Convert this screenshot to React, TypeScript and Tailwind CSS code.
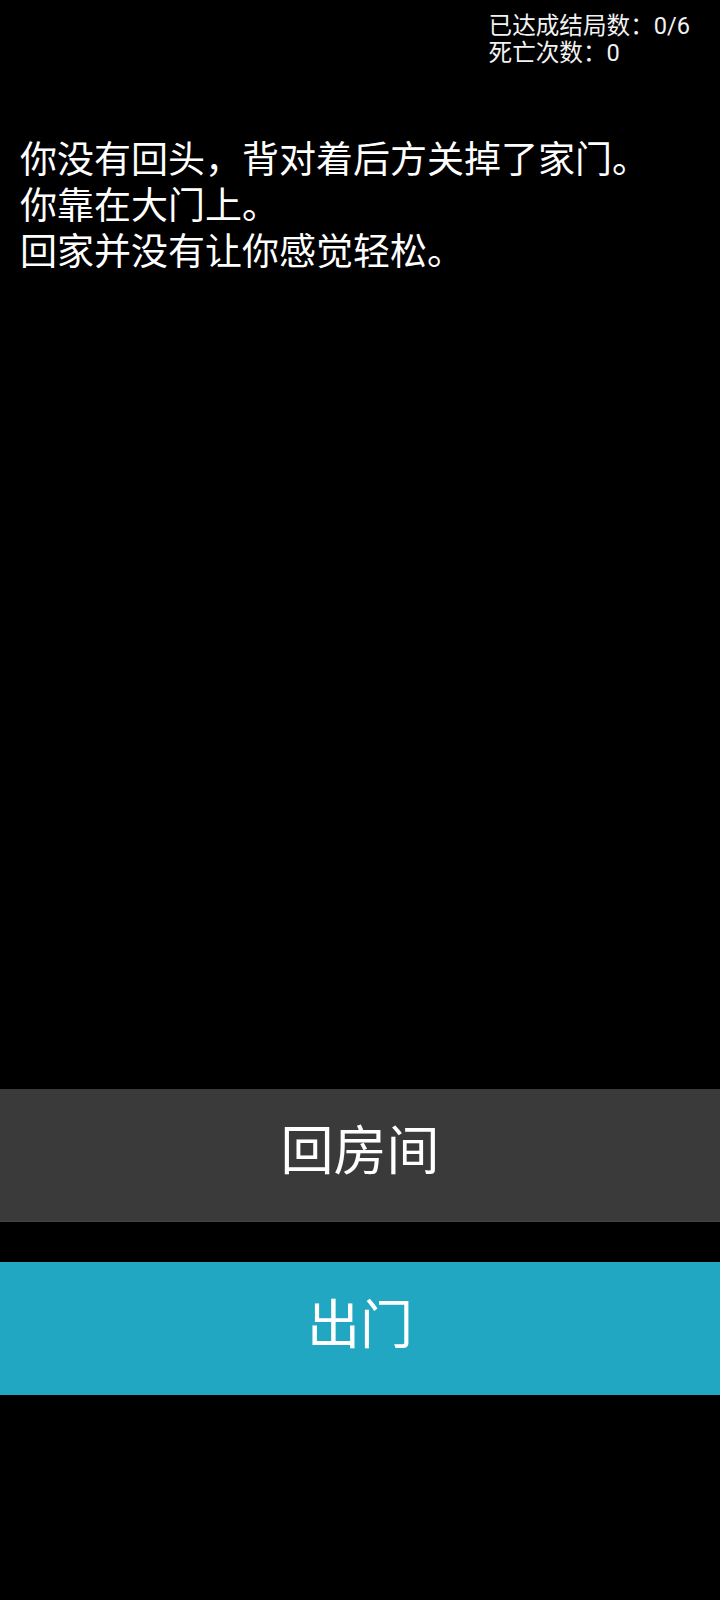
import React from 'react'

const font = { fontFamily: '"Roboto", "Noto Sans CJK SC", sans-serif' }

// story lines shown on the current page
const lines = [
    '你没有回头，背对着后方关掉了家门。',
    '你靠在大门上。',
    '回家并没有让你感觉轻松。',
]

const App = () => {
    return (
        <div className="h-[1600px] w-[720px] bg-black text-white flex flex-col" style={font}>
            {/* endings / deaths counter */}
            <div className="flex justify-end pt-[13px] pr-[30px]">
                <div className="text-[23.6px] leading-[27px] text-[#f2f2f2]">
                    <p>已达成结局数：0/6</p>
                    <p>死亡次数：0</p>
                </div>
            </div>

            <div className="flex-1 pl-[20px] pt-[71px] text-[37px] leading-[46px]">
                {lines.map((line, i) => (
                    <p key={i}>{line}</p>
                ))}
            </div>

            {/* choices */}
            <div className="flex flex-col gap-[40px] pb-[205px]">
                <button className="h-[133px] w-full bg-[#3a3a3a] border-b border-[#444] pb-[4px] text-[53px] text-white">
                    回房间
                </button>
                <button className="h-[133px] w-full bg-[#21a7c2] pb-[4px] text-[53px] text-white">
                    出门
                </button>
            </div>
        </div>
    )
}

export default App
